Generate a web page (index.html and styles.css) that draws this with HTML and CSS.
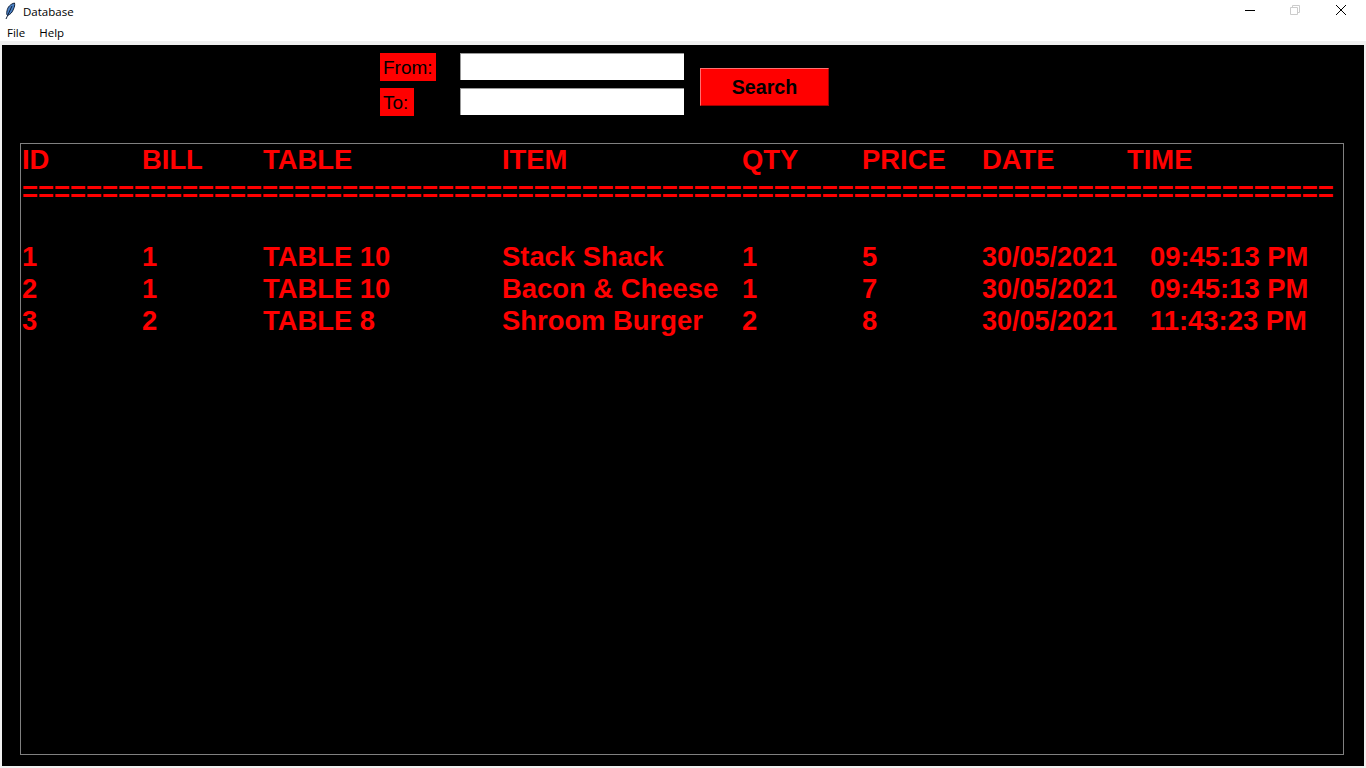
FILE: index.html
```html
<!DOCTYPE html>
<html>
    <head>
        <meta charset="utf-8">
        <title>Database</title>
        <link rel="stylesheet" href="styles.css">
    </head>

    <body>
        <div class="titlebar">
            <svg class="feather" width="16" height="18" viewBox="0 0 16 18">
                <path d="M12.500 1 C8.500 2 5.500 5 5 9 C4.500 11 4.500 12.500 5.500 13.500 C8.500 12.500 10.500 10 11.500 7 C12.500 5 13 3 12.500 1 Z" fill="#4a80c4" stroke="#10203a" stroke-width="1"/>
                <path d="M10 4 L4 17" fill="none" stroke="#10203a" stroke-width="1"/>
            </svg>
            <span class="title">Database</span>
            <div class="controls">
                <svg width="46" height="22" viewBox="0 0 46 22"><path d="M19 10.500 H29" stroke="#000"/></svg>
                <svg width="46" height="22" viewBox="0 0 46 22"><path d="M18.500 7.500 H25.500 V14.500 H18.500 Z M20.500 7.500 V5.500 H27.500 V12.500 H25.500" fill="none" stroke="#ccc"/></svg>
                <svg width="46" height="22" viewBox="0 0 46 22"><path d="M18 5 L28 15 M28 5 L18 15" stroke="#000"/></svg>
            </div>
        </div>

        <div class="menubar">
            <span class="menu-item">File</span>
            <span class="menu-item">Help</span>
        </div>

        <div class="main">
            <div class="search">
                <div class="fields">
                    <div class="field">
                        <div class="label-cell"><label class="label">From:</label></div>
                        <input class="date-input">
                    </div>
                    <div class="field">
                        <div class="label-cell"><label class="label">To:</label></div>
                        <input class="date-input">
                    </div>
                </div>
                <button class="search-button">Search</button>
            </div>

            <div class="panel">
                <div class="row">
                    <span>ID</span><span>BILL</span><span>TABLE</span><span>ITEM</span><span>QTY</span><span>PRICE</span><span>DATE</span><span>TIME</span>
                </div>
                <div class="rule">==================================================================================</div>
                <div class="rows">
                    <div class="row">
                        <span>1</span><span>1</span><span>TABLE 10</span><span>Stack Shack</span><span>1</span><span>5</span><span class="date">30/05/2021</span><span class="time">09:45:13 PM</span>
                    </div>
                    <div class="row">
                        <span>2</span><span>1</span><span>TABLE 10</span><span>Bacon &amp; Cheese</span><span>1</span><span>7</span><span class="date">30/05/2021</span><span class="time">09:45:13 PM</span>
                    </div>
                    <div class="row">
                        <span>3</span><span>2</span><span>TABLE 8</span><span>Shroom Burger</span><span>2</span><span>8</span><span class="date">30/05/2021</span><span class="time">11:43:23 PM</span>
                    </div>
                </div>
            </div>
        </div>
    </body>
</html>
```

FILE: styles.css
```css
html {
    background-color: #f0f0f0;
    font-family: "Liberation Sans", Arial, sans-serif;
}

body {
    margin: 0;
    height: 768px;
    overflow: hidden;
    display: flex;
    flex-direction: column;
}

.titlebar {
    height: 22px;
    background: #fff;
    display: flex;
    align-items: center;
    font-family: "Open Sans", sans-serif;
    font-size: 11.5px;
    color: #000;
}

.feather {
    margin-left: 2px;
    flex: none;
}

.title {
    margin-left: 5px;
}

.controls {
    margin-left: auto;
    margin-right: 2px;
    display: flex;
}

.menubar {
    box-sizing: border-box;
    height: 19px;
    background: #fff;
    display: flex;
    align-items: center;
    gap: 14px;
    padding-left: 7px;
    padding-top: 2px;
    font-family: "Open Sans", sans-serif;
    font-size: 11.5px;
    color: #000;
}

.main {
    margin: 4px 2px 2px;
    flex: 1;
    background: #000;
    padding: 8px 20px 11px 18px;
    display: flex;
    flex-direction: column;
}

.search {
    display: flex;
    align-items: center;
    padding-left: 360px;
    height: 63px;
    margin-bottom: 27px;
}

.fields {
    display: flex;
    flex-direction: column;
    gap: 7px;
}

.field {
    display: flex;
    height: 28px;
}

.label-cell {
    width: 80px;
}

.label {
    display: inline-block;
    box-sizing: border-box;
    min-width: 34px;
    height: 28px;
    line-height: 29px;
    padding: 0 3px;
    background: #f00;
    color: #000;
    font-size: 19px;
}

.date-input {
    box-sizing: border-box;
    width: 224px;
    height: 27px;
    padding: 0;
    background: #fff;
    border: none;
    border-top: 1px solid #999;
    border-left: 1px solid #999;
}

.search-button {
    box-sizing: border-box;
    margin-left: 16px;
    margin-top: 4px;
    width: 129px;
    height: 38px;
    padding: 2px 0 0;
    background: #f00;
    color: #000;
    font-family: inherit;
    font-size: 19.7px;
    font-weight: bold;
    border: 1px solid;
    border-color: #ff7070 #a00000 #a00000 #ff7070;
}

.panel {
    flex: 1;
    border: 1px solid #808080;
    padding-left: 1px;
    color: #f00;
    font-size: 27.4px;
    font-weight: bold;
    line-height: 32px;
}

.row {
    display: grid;
    grid-template-columns: 120px 121px 239px 240px 120px 120px 145px 1fr;
    white-space: nowrap;
}

.rule {
    height: 32px;
    white-space: nowrap;
    overflow: hidden;
}

.rows {
    margin-top: 33px;
}

.date {
    font-size: 27px;
}

.time {
    padding-left: 23px;
}
```
